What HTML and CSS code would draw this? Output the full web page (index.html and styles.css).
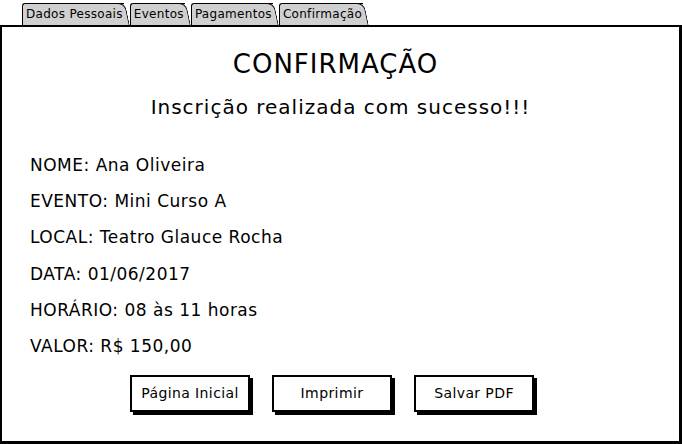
FILE: index.html
```html
<!DOCTYPE html>
<html lang="pt-BR">
<head>
<meta charset="utf-8">
<title>Confirmação</title>
<link rel="stylesheet" href="styles.css">
</head>
<body>
<div class="tabs">
  <div class="tab">Dados Pessoais</div>
  <div class="tab">Eventos</div>
  <div class="tab">Pagamentos</div>
  <div class="tab">Confirmação</div>
</div>
<div class="panel">
  <h1 class="title">CONFIRMAÇÃO</h1>
  <p class="subtitle">Inscrição realizada com sucesso!!!</p>
  <ul class="details">
    <li>NOME: Ana Oliveira</li>
    <li>EVENTO: Mini Curso A</li>
    <li>LOCAL: Teatro Glauce Rocha</li>
    <li>DATA: 01/06/2017</li>
    <li>HORÁRIO: 08 às 11 horas</li>
    <li>VALOR: R$ 150,00</li>
  </ul>
  <div class="actions">
    <button class="btn">Página Inicial</button>
    <button class="btn">Imprimir</button>
    <button class="btn">Salvar PDF</button>
  </div>
</div>
</body>
</html>
```
FILE: styles.css
```css
* { box-sizing: border-box; }
html, body { margin: 0; padding: 0; background: #fff; }
body {
  width: 682px;
  height: 444px;
  overflow: hidden;
  font-family: "DejaVu Sans", "Open Sans", sans-serif;
  color: #000;
}
.tabs {
  display: flex;
  padding: 3px 0 0 22px;
  height: 25px;
}
.tab {
  position: relative;
  height: 22px;
  padding: 2px 7px 0 4px;
  font-size: 12px;
  letter-spacing: 0.3px;
  line-height: 18px;
  z-index: 1;
}
.tab::before {
  content: "";
  position: absolute;
  left: 0; top: 0; right: 6px; bottom: -1px;
  background: #d0d0d0;
  border-left: 1px solid #000;
  border-top: 1px solid #000;
  border-radius: 3px 0 0 0;
  z-index: -1;
}
.tab::after {
  content: "";
  position: absolute;
  top: 0; right: 0; bottom: -1px;
  width: 14px;
  background: #d0d0d0;
  border-top: 1px solid #000;
  border-right: 1px solid #000;
  border-radius: 0 7px 0 0;
  transform-origin: right bottom;
  transform: skewX(12deg);
  z-index: -1;
}
.panel {
  position: relative;
  height: 419px;
  border: 2px solid #000;
  border-right-width: 3px;
  border-bottom-width: 3px;
  background: #fff;
  z-index: 2;
}
.title {
  margin: 22px 0 0;
  text-align: center;
  font-weight: 400;
  font-size: 26px;
  letter-spacing: 1px;
  line-height: 30px;
  padding-right: 10px;
}
.subtitle {
  margin: 15px 0 0;
  text-align: center;
  font-size: 20px;
  letter-spacing: 1px;
  line-height: 26px;
}
.details {
  list-style: none;
  margin: 34px 0 0;
  padding: 0 0 0 28px;
}
.details li {
  font-size: 17px;
  letter-spacing: 0.5px;
  line-height: 22px;
  margin-bottom: 14.2px;
}
.actions {
  display: flex;
  gap: 22px;
  padding-left: 128px;
  margin-top: 18px;
}
.btn {
  width: 120px;
  height: 37px;
  background: #fff;
  border: 2px solid #000;
  box-shadow: 3px 3px 0 #000;
  font-family: inherit;
  font-size: 14px;
  letter-spacing: 0.4px;
  color: #000;
  padding: 0;
}
```
